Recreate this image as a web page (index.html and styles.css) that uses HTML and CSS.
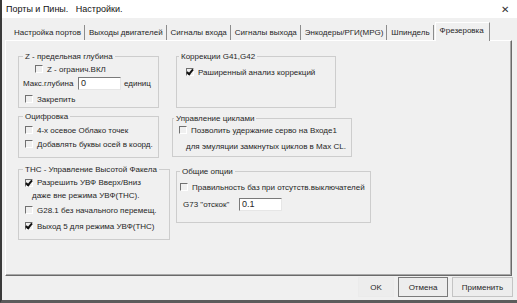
FILE: index.html
```html
<!DOCTYPE html>
<html lang="ru">
  <head>
    <meta charset="UTF-8" />
    <meta name="viewport" content="width=device-width, initial-scale=1.0" />
    <title>Порты и Пины. Настройки.</title>
    <link rel="stylesheet" href="styles.css">
  </head>
  <body>
    <div class="window">
      <div class="titlebar">
        <span class="title">Порты и Пины.   Настройки.</span>
        <span class="close">✕</span>
      </div>

      <div class="tabs">
        <span class="tab">Настройка портов</span>
        <span class="tab">Выходы двигателей</span>
        <span class="tab">Сигналы входа</span>
        <span class="tab">Сигналы выхода</span>
        <span class="tab">Энкодеры/РГИ(MPG)</span>
        <span class="tab">Шпиндель</span>
        <span class="tab active">Фрезеровка</span>
      </div>

      <div class="panel">
        <div class="col col-left">
          <div class="group g-zlimit">
            <div class="group-title">Z - предельная глубина</div>
            <label class="row r-zon"><span class="cb"></span>Z - огранич.ВКЛ</label>
            <div class="row r-maxdepth">
              <span class="field-label">Макс.глубина</span>
              <span class="input">0</span>
              <span>единиц</span>
            </div>
            <label class="row r-lock"><span class="cb"></span>Закрепить</label>
          </div>

          <div class="group g-digit">
            <div class="group-title">Оцифровка</div>
            <label class="row r-first"><span class="cb"></span>4-х осевое Облако точек</label>
            <label class="row"><span class="cb"></span>Добавлять буквы осей в коорд.</label>
          </div>

          <div class="group g-thc">
            <div class="group-title">ТНС - Управление Высотой Факела</div>
            <label class="row r-first r-tight"><span class="cb checked"></span>Разрешить УВФ Вверх/Вниз</label>
            <div class="row r-tight r-cont">даже вне режима УВФ(ТНС).</div>
            <label class="row r-g28"><span class="cb"></span>G28.1 без начального перемещ.</label>
            <label class="row r-out5"><span class="cb checked"></span>Выход 5 для режима УВФ(ТНС)</label>
          </div>
        </div>

        <div class="col col-mid">
          <div class="group g-comp">
            <div class="group-title">Коррекции G41,G42</div>
            <label class="row r-comp"><span class="cb checked"></span>Раширенный анализ коррекций</label>
          </div>

          <div class="group g-cycles">
            <div class="group-title">Управление циклами</div>
            <label class="row r-servo"><span class="cb"></span>Позволить удержание серво на Входе1</label>
            <div class="row r-cont">для эмуляции замкнутых циклов в Max CL.</div>
          </div>

          <div class="group g-common">
            <div class="group-title">Общие опции</div>
            <label class="row r-home"><span class="cb"></span>Правильность баз при отсутств.выключателей</label>
            <div class="row r-g73">
              <span class="field-label">G73 "отскок"</span>
              <span class="input">0.1</span>
            </div>
          </div>
        </div>
      </div>

      <div class="buttons">
        <button class="btn btn-ok">OK</button>
        <button class="btn btn-cancel">Отмена</button>
        <button class="btn btn-apply">Применить</button>
      </div>
    </div>
  </body>
</html>
```

FILE: styles.css
```css
body {
  margin: 0;
  background: #f0f0f0;
  font-family: "Liberation Sans", Arial, sans-serif;
  font-size: 8px;
  color: #262626;
}

.window {
  width: 517px;
  height: 303px;
  box-sizing: border-box;
  border-left: 2px solid #3a3a3a;
  border-bottom: 3px solid #5c5c5c;
  display: flex;
  flex-direction: column;
}

/* заголовок окна */
.titlebar {
  height: 18px;
  background: #fff;
  display: flex;
  align-items: center;
  justify-content: space-between;
  padding: 0 8px 0 4px;
}

.title {
  white-space: pre;
  font-size: 9px;
  color: #111;
}

.close {
  font-size: 10px;
  color: #333;
}

/* вкладки */
.tabs {
  height: 22px;
  display: flex;
  align-items: flex-end;
  padding-left: 8px;
}

.tab {
  height: 15px;
  line-height: 15px;
  padding: 0 3px 0 4px;
  border-right: 1px solid #8c8c8c;
  white-space: nowrap;
}

.tab.active {
  height: 18px;
  line-height: 16px;
  margin-left: 1px;
  margin-bottom: -1px;
  padding: 0 5px 0 4px;
  border: 1px solid #fff;
  border-right-color: #8c8c8c;
  border-bottom: none;
  background: #f0f0f0;
  position: relative;
  z-index: 1;
}

/* панель вкладки */
.panel {
  margin-left: 3px;
  width: 507px;
  height: 236px;
  box-sizing: border-box;
  border: 1px solid #fff;
  border-right-color: #6a6a6a;
  border-bottom-color: #6a6a6a;
  box-shadow: inset -1px -1px 0 #a8a8a8;
  display: flex;
  padding: 15px 0 0 12px;
}

.col {
  display: flex;
  flex-direction: column;
}

.col-left {
  width: 154px;
}

/* групповые рамки */
.group {
  border: 1px solid #cdcdcd;
  box-sizing: border-box;
}

.group-title {
  width: fit-content;
  height: 11px;
  line-height: 11px;
  margin: -6px 0 0 4px;
  padding: 0 2px;
  background: #f0f0f0;
  white-space: nowrap;
}

.row {
  height: 14px;
  display: flex;
  align-items: center;
  gap: 4px;
  margin-left: 6px;
  white-space: nowrap;
}

.cb {
  width: 8px;
  height: 8px;
  box-sizing: border-box;
  border: 1px solid #fff;
  border-top-color: #707070;
  border-left-color: #707070;
  position: relative;
  flex: none;
}

.cb.checked::after {
  content: "";
  position: absolute;
  left: 1px;
  top: -1px;
  width: 2px;
  height: 5px;
  border: solid #111;
  border-width: 0 2px 2px 0;
  transform: rotate(40deg);
}

.input {
  width: 43px;
  height: 13px;
  box-sizing: border-box;
  background: #fff;
  border: 1px solid #e6e6e6;
  border-top-color: #7a7a7a;
  border-left-color: #7a7a7a;
  padding-left: 2px;
  line-height: 11px;
  font-size: 9px;
}

.field-label {
  width: 52px;
}

.r-first {
  margin-top: 1px;
}

.r-cont {
  margin-left: 13px;
}

/* левая колонка */
.g-zlimit {
  height: 52px;
}

.r-zon {
  margin-left: 16px;
}

.r-maxdepth {
  margin-left: 4px;
  gap: 3px;
}

.r-lock {
  margin-top: 2px;
}

.g-digit {
  height: 42px;
  margin-top: 8px;
}

.g-thc {
  width: 152px;
  height: 71px;
  margin-top: 11px;
}

.r-tight {
  height: 13px;
}

.r-g28 {
  margin-top: 1px;
}

.r-out5 {
  margin-top: 2px;
}

.g-zlimit,
.g-digit {
  width: 141px;
}

/* средняя колонка */
.g-comp {
  width: 160px;
  height: 52px;
  margin-left: 4px;
}

.g-comp .group-title {
  margin-left: 2px;
}

.r-comp {
  margin: 3px 0 0 9px;
}

.g-cycles {
  width: 180px;
  height: 39px;
  margin-top: 10px;
}

.g-cycles .group-title {
  margin-left: 1px;
}

.r-servo {
  height: 12px;
  margin-top: 0;
}

.g-cycles .r-cont {
  margin-top: 3px;
}

.g-common {
  width: 195px;
  height: 52px;
  margin: 14px 0 0 4px;
}

.g-common .group-title {
  margin-left: 3px;
}

.r-home {
  margin: 3px 0 0 3px;
}

.r-g73 {
  margin: 3px 0 0 6px;
  gap: 0;
}

.r-g73 .field-label {
  width: 56px;
}

/* кнопки */
.buttons {
  display: flex;
  justify-content: flex-end;
  gap: 4px;
  margin-top: 1px;
  padding-right: 4px;
}

.btn {
  height: 20px;
  padding: 0;
  font-family: inherit;
  font-size: 8px;
  color: #262626;
  background: #ededed;
  border: 1px solid #c4c4c4;
}

.btn-ok {
  width: 36px;
  border-color: #ebebeb;
}

.btn-cancel {
  width: 50px;
  border-color: #7a7a7a;
}

.btn-apply {
  width: 61px;
}
```
